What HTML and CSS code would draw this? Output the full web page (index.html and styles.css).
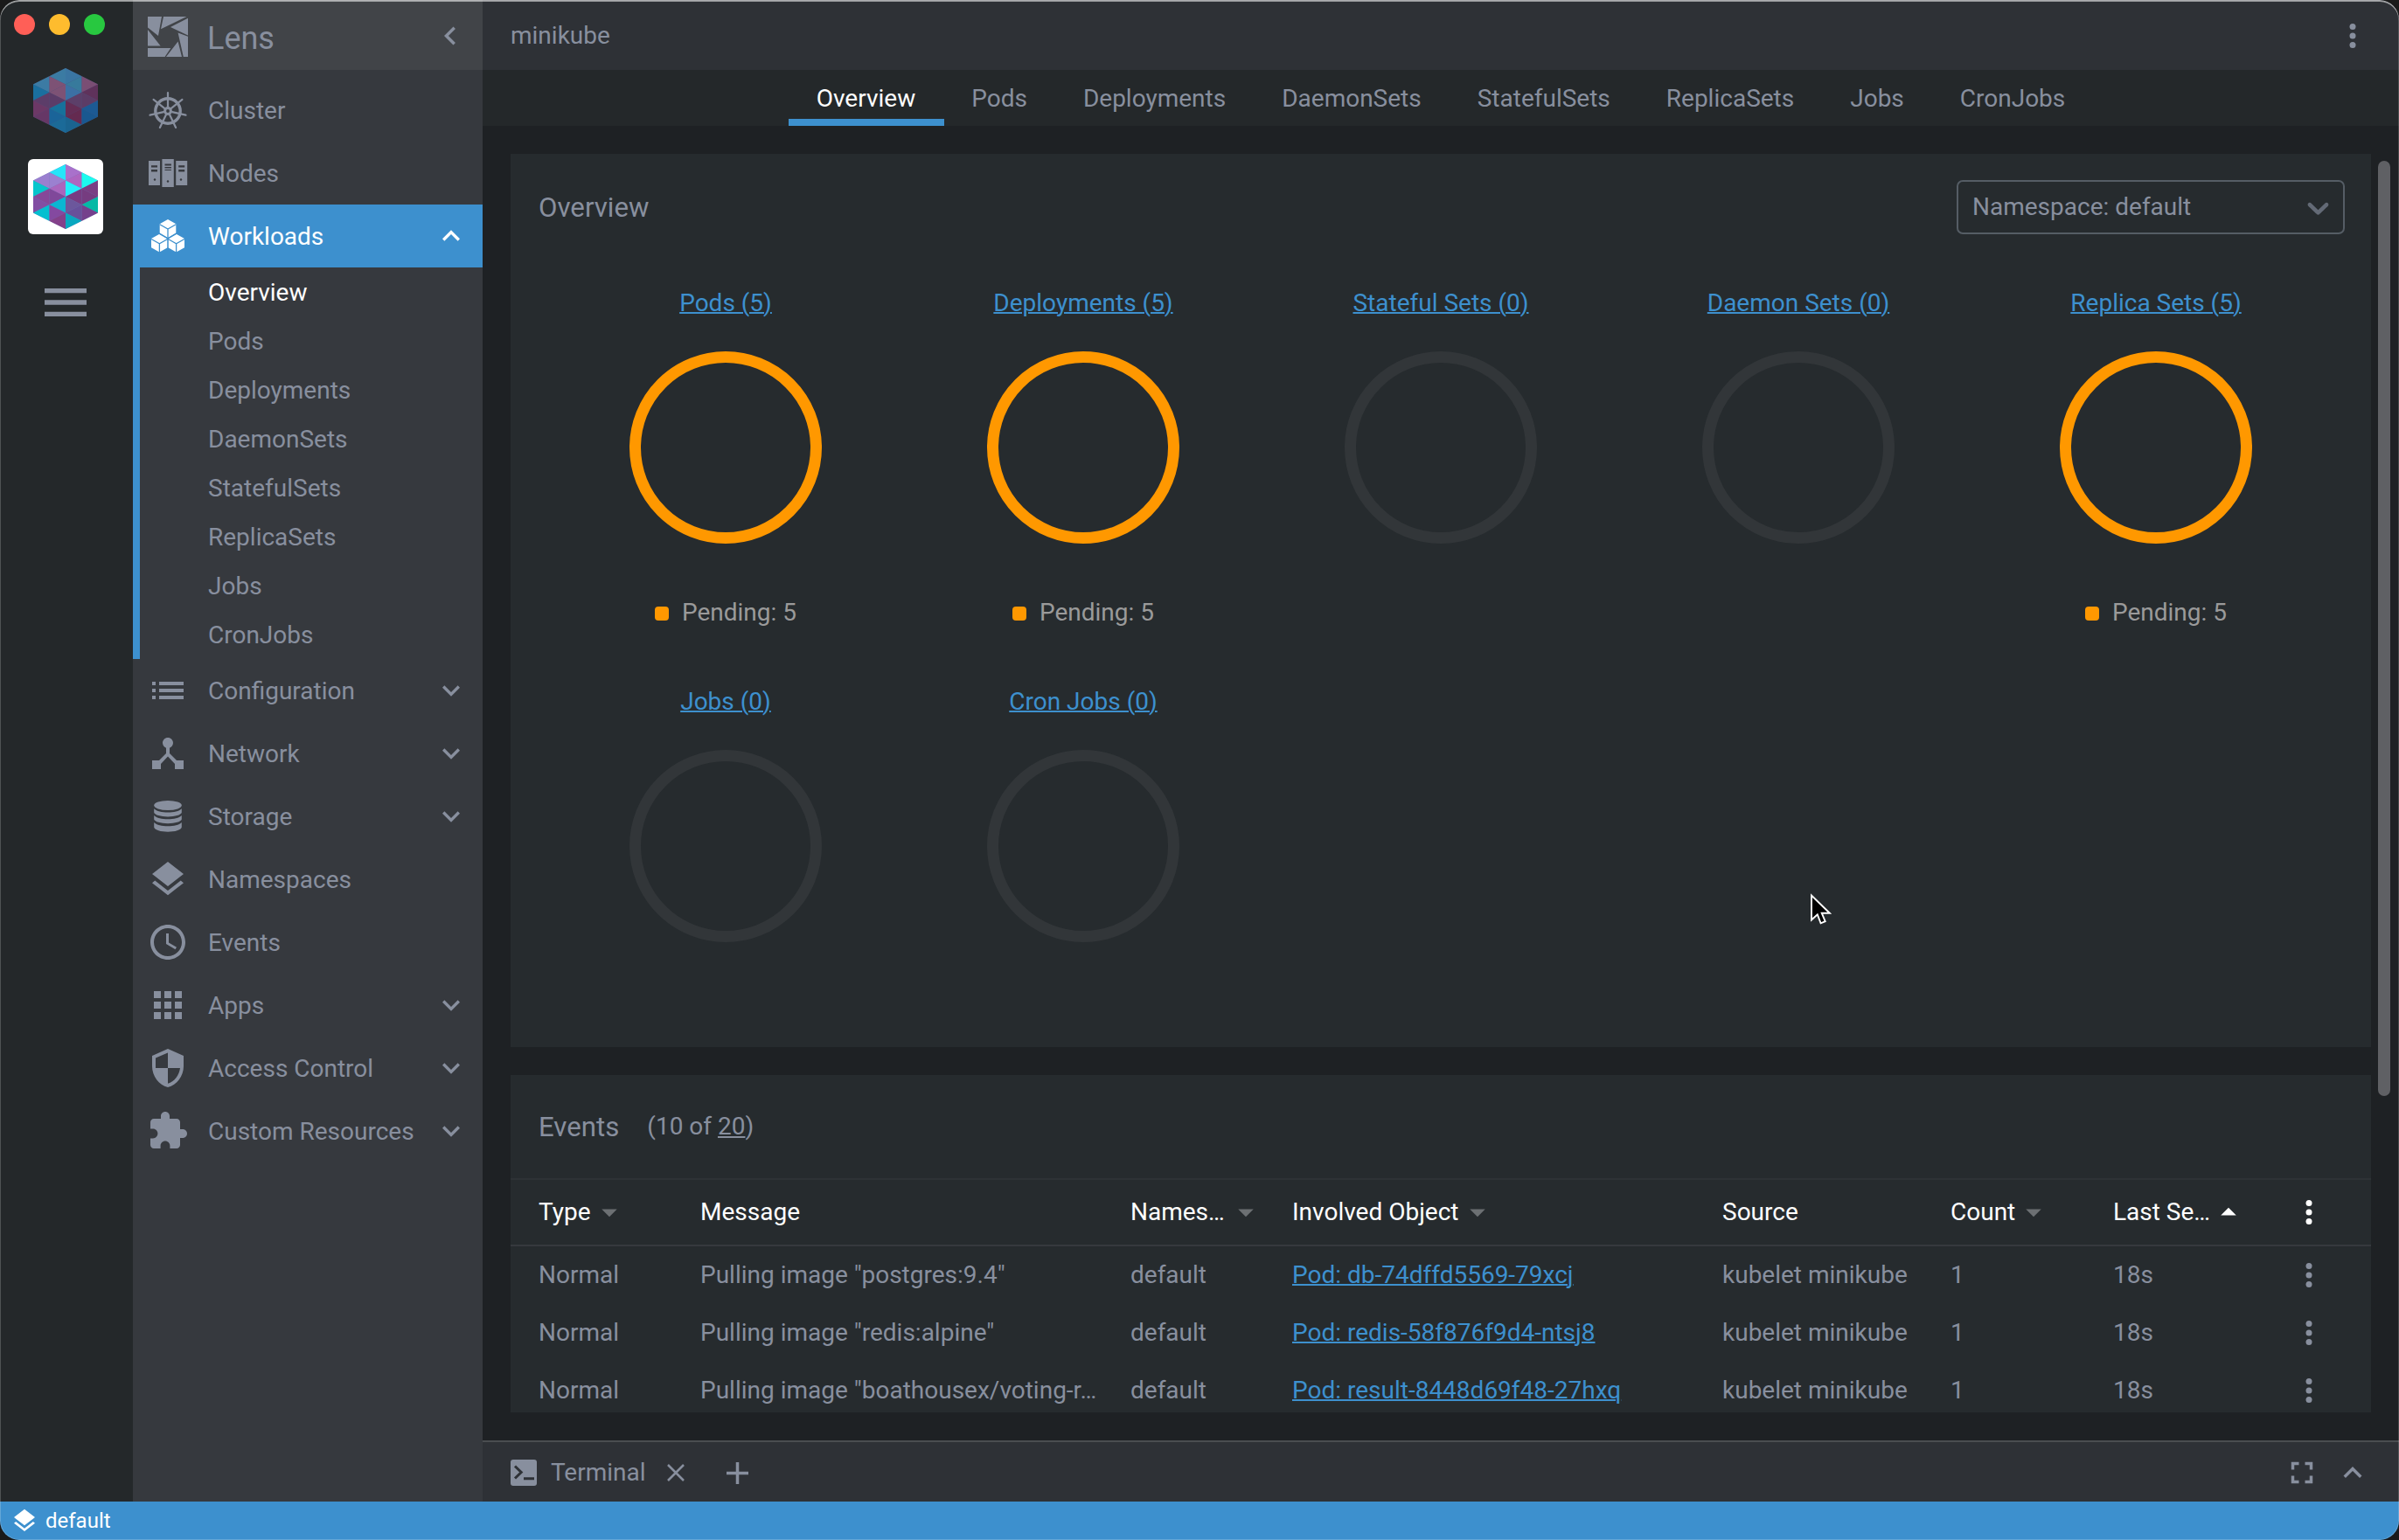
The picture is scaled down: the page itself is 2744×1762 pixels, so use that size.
FILE: index.html
```html
<!DOCTYPE html>
<html lang="en">
<head>
<meta charset="utf-8">
<title>Lens</title>
<link rel="stylesheet" href="styles.css">
</head>
<body>
<svg class="defs" width="0" height="0" aria-hidden="true">
  <symbol id="down" viewBox="0 0 24 24"><path d="M16.59 8.59L12 13.17 7.41 8.59 6 10l6 6 6-6z"/></symbol>
  <symbol id="up" viewBox="0 0 24 24"><path d="M12 8l-6 6 1.41 1.41L12 10.83l4.59 4.58L18 14z"/></symbol>
  <symbol id="more" viewBox="0 0 24 24"><circle cx="12" cy="6" r="2"/><circle cx="12" cy="12" r="2"/><circle cx="12" cy="18" r="2"/></symbol>
  <symbol id="sort-down" viewBox="0 0 24 24"><path d="M7 10l5 5 5-5z"/></symbol>
  <symbol id="sort-up" viewBox="0 0 24 24"><path d="M7 14l5-5 5 5z"/></symbol>
  <symbol id="layers" viewBox="0 0 24 24"><path d="M11.99 18.54l-7.37-5.73L3 14.07l9 7 9-7-1.63-1.27-7.38 5.74zM12 16l7.36-5.73L21 9l-9-7-9 7 1.63 1.27L12 16z"/></symbol>
</svg>
<div class="window">
  <aside class="rail">
    <div class="lights"><i class="light red"></i><i class="light yellow"></i><i class="light green"></i></div>
    <div class="cluster">
      <svg class="hash" viewBox="-2 -4 4 8" preserveAspectRatio="none">
        <path fill="#4a5580" d="M0-4 2-2V2L0 4-2 2V-2z"/>
        <path fill="#3c7ba4" d="M-2-2-1-3-1-1z"/><path fill="#1a6f9f" d="M-2-2-2 0-1-1z"/><path fill="#5c3d69" d="M-1-1-2 0-1 1z"/><path fill="#6c3866" d="M-2 0-2 2-1 1z"/><path fill="#663766" d="M-1 1-2 2-1 3z"/>
        <path fill="#3b7ba3" d="M0-4 0-2-1-3z"/><path fill="#7d5275" d="M-1-3 0-2-1-1z"/><path fill="#7d5275" d="M0-2 0 0-1-1z"/><path fill="#5b3c68" d="M-1-1 0 0-1 1z"/><path fill="#17719b" d="M0 0 0 2-1 1z"/><path fill="#1a6499" d="M-1 1 0 2-1 3z"/><path fill="#1b6a98" d="M0 2 0 4-1 3z"/>
        <path fill="#3a75a2" d="M0-4 0-2 1-3z"/><path fill="#377a9c" d="M1-3 0-2 1-1z"/><path fill="#3c70a4" d="M0-2 0 0 1-1z"/><path fill="#5c3f69" d="M1-1 0 0 1 1z"/><path fill="#642d55" d="M0 0 0 2 1 1z"/><path fill="#642a50" d="M1 1 0 2 1 3z"/><path fill="#1a6490" d="M0 2 0 4 1 3z"/>
        <path fill="#7a4e74" d="M2-2 1-3 1-1z"/><path fill="#5f325b" d="M2-2 2 0 1-1z"/><path fill="#5c3c66" d="M1-1 2 0 1 1z"/><path fill="#1c5a94" d="M2 0 2 2 1 1z"/><path fill="#195890" d="M1 1 2 2 1 3z"/>
      </svg>
    </div>
    <div class="cluster active">
      <svg class="hash" viewBox="-2 -4 4 8" preserveAspectRatio="none">
        <path fill="#6a7cb8" d="M0-4 2-2V2L0 4-2 2V-2z"/>
        <path fill="#9a7fcf" d="M-2-2-1-3-1-1z"/><path fill="#06c5cc" d="M-2-2-2 0-1-1z"/><path fill="#864899" d="M-1-1-2 0-1 1z"/><path fill="#824ea3" d="M-2 0-2 2-1 1z"/><path fill="#04bfd0" d="M-1 1-2 2-1 3z"/>
        <path fill="#24e5f9" d="M0-4 0-2-1-3z"/><path fill="#9b80d0" d="M-1-3 0-2-1-1z"/><path fill="#aa66bd" d="M0-2 0 0-1-1z"/><path fill="#80489a" d="M-1-1 0 0-1 1z"/><path fill="#0bb6d2" d="M0 0 0 2-1 1z"/><path fill="#8449a0" d="M-1 1 0 2-1 3z"/><path fill="#844089" d="M0 2 0 4-1 3z"/>
        <path fill="#a971cb" d="M0-4 0-2 1-3z"/><path fill="#ae66c0" d="M1-3 0-2 1-1z"/><path fill="#22eefb" d="M0-2 0 0 1-1z"/><path fill="#783c82" d="M1-1 0 0 1 1z"/><path fill="#6c579c" d="M0 0 0 2 1 1z"/><path fill="#68509a" d="M1 1 0 2 1 3z"/><path fill="#09a8c0" d="M0 2 0 4 1 3z"/>
        <path fill="#1cfbef" d="M2-2 1-3 1-1z"/><path fill="#7a3f83" d="M2-2 2 0 1-1z"/><path fill="#763c80" d="M1-1 2 0 1 1z"/><path fill="#06b9a5" d="M2 0 2 2 1 1z"/><path fill="#75408c" d="M1 1 2 2 1 3z"/>
      </svg>
    </div>
    <svg class="burger" viewBox="0 0 24 24"><path d="M3 18h18v-2H3v2zm0-5h18v-2H3v2zm0-7v2h18V6H3z"/></svg>
  </aside>

  <nav class="sidebar">
    <header class="brand">
      <svg class="logo" viewBox="0 0 46 46"><path d="M0 0H16L12 22 0 12.5zM18 0H44.5L15 14.2zM46 1.7V21.5L26 12zM34.6 18.5L46 22.8V46H40.8zM34.6 28.5L39 46H21zM0 36H26.3L19.6 46H0zM0 15L14.6 33.6H0z"/></svg>
      <span>Lens</span>
      <svg class="collapse" viewBox="0 0 24 24"><path d="M15.41 7.41L14 6l-6 6 6 6 1.41-1.41L10.83 12z"/></svg>
    </header>
    <div class="menu">
      <a class="item">
        <svg class="icon" viewBox="0 0 48 48"><circle cx="24" cy="25" r="14.2" fill="none" stroke="currentColor" stroke-width="3.4"/><g stroke="currentColor" stroke-width="2.2" stroke-linecap="round"><path id="spoke" d="M24 20V4"/><use href="#spoke" transform="rotate(51.43 24 25)"/><use href="#spoke" transform="rotate(102.86 24 25)"/><use href="#spoke" transform="rotate(154.29 24 25)"/><use href="#spoke" transform="rotate(205.71 24 25)"/><use href="#spoke" transform="rotate(257.14 24 25)"/><use href="#spoke" transform="rotate(308.57 24 25)"/></g><circle cx="24" cy="25" r="3.4" fill="none" stroke="currentColor" stroke-width="3"/></svg>
        <span>Cluster</span></a>
      <a class="item">
        <svg class="icon" viewBox="0 0 48 48"><path d="M2 10h13v28H2zM17.4 8h13.4v32H17.4zM33.2 10h13v28h-13z"/><g fill="#36393e"><path d="M5 15.2h7v2.4H5zM5 20h7v2.4H5zM20.5 13.6h7.4v2H20.5zM20.5 17h7.4v1.4H20.5zM20.5 20h7.4v1H20.5zM36.2 15.2h7v2.4h-7zM36.2 20h7v2.4h-7z"/><circle cx="9" cy="31.5" r="1.2"/><circle cx="24" cy="33.5" r="1.2"/><circle cx="39" cy="31.5" r="1.2"/></g></svg>
        <span>Nodes</span></a>
      <a class="item open">
        <svg class="icon" viewBox="0 0 48 48"><path d="M24 5l9.3 5.2v10.4L24 26l-9.3-5.4V10.2zM14.4 21.7l9.3 5.2v10.4L14.4 42.6 5 37.3V26.9zM33.6 21.7L43 26.9v10.4l-9.4 5.3-9.3-5.3V26.9z"/><path d="M14.7 10.8L24 16l9.3-5.2M24 16v10M5 27.5l9.4 5.2 9.3-5.2M14.4 32.7V43M24.3 27.5l9.3 5.2 9.4-5.2M33.6 32.7V43M24 26v12M14 21.3L24 27l10-5.7" fill="none" stroke="#3d90ce" stroke-width="1.3"/></svg>
        <span>Workloads</span><svg class="chev"><use href="#up"/></svg></a>
      <div class="submenu">
        <a class="current">Overview</a><a>Pods</a><a>Deployments</a><a>DaemonSets</a><a>StatefulSets</a><a>ReplicaSets</a><a>Jobs</a><a>CronJobs</a>
      </div>
      <a class="item"><svg class="icon" viewBox="0 0 24 24"><path d="M3 13h2v-2H3v2zm0 4h2v-2H3v2zm0-8h2V7H3v2zm4 4h14v-2H7v2zm0 4h14v-2H7v2zM7 7v2h14V7H7z"/></svg><span>Configuration</span><svg class="chev"><use href="#down"/></svg></a>
      <a class="item"><svg class="icon" viewBox="0 0 24 24"><path d="M17 16l-4-4V8.82C14.16 8.4 15 7.3 15 6c0-1.66-1.34-3-3-3S9 4.34 9 6c0 1.3.84 2.4 2 2.82V12l-4 4H3v5h5v-3.05l4-4.2 4 4.2V21h5v-5h-4z"/></svg><span>Network</span><svg class="chev"><use href="#down"/></svg></a>
      <a class="item"><svg class="icon" viewBox="0 0 48 48"><ellipse cx="24" cy="11.5" rx="15.8" ry="5.5"/><path d="M8.2 15.2c3 3 9 4.2 15.8 4.2s12.8-1.2 15.8-4.2v4.6c-1 2.7-7.5 4.6-15.8 4.6S9.2 22.5 8.2 19.8zM8.2 23c3 3 9 4.2 15.8 4.2S36.8 26 39.8 23v4.6c-1 2.7-7.5 4.6-15.8 4.6S9.2 30.3 8.2 27.6zM8.2 31c3 3 9 4.2 15.8 4.2s12.8-1.2 15.8-4.2v5.6c-1 3.2-7.5 5.2-15.8 5.2S9.2 39.8 8.2 36.6z"/></svg><span>Storage</span><svg class="chev"><use href="#down"/></svg></a>
      <a class="item"><svg class="icon"><use href="#layers"/></svg><span>Namespaces</span></a>
      <a class="item"><svg class="icon" viewBox="0 0 24 24"><path d="M11.99 2C6.47 2 2 6.48 2 12s4.47 10 9.99 10C17.52 22 22 17.52 22 12S17.52 2 11.99 2zM12 20c-4.42 0-8-3.58-8-8s3.58-8 8-8 8 3.58 8 8-3.58 8-8 8zm.5-13H11v6l5.25 3.15.75-1.23-4.5-2.67z"/></svg><span>Events</span></a>
      <a class="item"><svg class="icon" viewBox="0 0 24 24"><path d="M4 8h4V4H4v4zm6 12h4v-4h-4v4zm-6 0h4v-4H4v4zm0-6h4v-4H4v4zm6 0h4v-4h-4v4zm6-10v4h4V4h-4zm-6 4h4V4h-4v4zm6 6h4v-4h-4v4zm0 6h4v-4h-4v4z"/></svg><span>Apps</span><svg class="chev"><use href="#down"/></svg></a>
      <a class="item"><svg class="icon" viewBox="0 0 24 24"><path d="M12 1L3 5v6c0 5.55 3.84 10.74 9 12 5.16-1.26 9-6.45 9-12V5l-9-4zm0 10.99h7c-.53 4.12-3.28 7.79-7 8.94V12H5V6.3l7-3.11v8.8z"/></svg><span>Access Control</span><svg class="chev"><use href="#down"/></svg></a>
      <a class="item"><svg class="icon" viewBox="0 0 24 24"><path d="M20.5 11H19V7c0-1.1-.9-2-2-2h-4V3.5C13 2.12 11.88 1 10.5 1S8 2.12 8 3.5V5H4c-1.1 0-1.99.9-1.99 2v3.8H3.5c1.49 0 2.7 1.21 2.7 2.7s-1.21 2.7-2.7 2.7H2V20c0 1.1.9 2 2 2h3.8v-1.5c0-1.49 1.21-2.7 2.7-2.7 1.49 0 2.7 1.21 2.7 2.7V22H17c1.1 0 2-.9 2-2v-4h1.5c1.38 0 2.5-1.12 2.5-2.5S21.88 11 20.5 11z"/></svg><span>Custom Resources</span><svg class="chev"><use href="#down"/></svg></a>
    </div>
  </nav>

  <main class="main">
    <header class="topbar"><span>minikube</span><svg class="i42"><use href="#more"/></svg></header>
    <div class="tabs"><a class="tab on">Overview</a><a class="tab">Pods</a><a class="tab">Deployments</a><a class="tab">DaemonSets</a><a class="tab">StatefulSets</a><a class="tab">ReplicaSets</a><a class="tab">Jobs</a><a class="tab">CronJobs</a></div>
    <div class="content">
      <div class="panels">
        <section class="panel overview">
          <div class="head">
            <h2>Overview</h2>
            <div class="select"><span>Namespace: default</span><svg viewBox="0 0 20 20"><path d="M4.516 7.548c.436-.446 1.043-.481 1.576 0L10 11.295l3.908-3.747c.533-.481 1.141-.446 1.574 0 .436.445.408 1.197 0 1.615-.406.418-4.695 4.502-4.695 4.502-.217.223-.502.335-.787.335s-.57-.112-.789-.335c0 0-4.287-4.084-4.695-4.502s-.436-1.17 0-1.615z"/></svg></div>
          </div>
          <div class="charts">
            <div class="chart"><a class="link">Pods (5)</a><div class="ring pending"></div><div class="legend"><i></i>Pending: 5</div></div>
            <div class="chart"><a class="link">Deployments (5)</a><div class="ring pending"></div><div class="legend"><i></i>Pending: 5</div></div>
            <div class="chart"><a class="link">Stateful Sets (0)</a><div class="ring"></div></div>
            <div class="chart"><a class="link">Daemon Sets (0)</a><div class="ring"></div></div>
            <div class="chart"><a class="link">Replica Sets (5)</a><div class="ring pending"></div><div class="legend"><i></i>Pending: 5</div></div>
            <div class="chart"><a class="link">Jobs (0)</a><div class="ring"></div></div>
            <div class="chart"><a class="link">Cron Jobs (0)</a><div class="ring"></div></div>
          </div>
        </section>
        <section class="panel events">
          <div class="head"><h2>Events</h2><span>(10 of <u>20</u>)</span></div>
          <div class="row thead">
            <div class="cell"><span>Type</span><svg class="i42"><use href="#sort-down"/></svg></div>
            <div class="cell"><span>Message</span></div>
            <div class="cell"><span class="fill">Names…</span><svg class="i42"><use href="#sort-down"/></svg></div>
            <div class="cell"><span>Involved Object</span><svg class="i42"><use href="#sort-down"/></svg></div>
            <div class="cell"><span>Source</span></div>
            <div class="cell"><span>Count</span><svg class="i42"><use href="#sort-down"/></svg></div>
            <div class="cell sorted"><span class="fill">Last Se…</span><svg class="i42"><use href="#sort-up"/></svg></div>
            <div class="cell sorted"><svg class="i42"><use href="#more"/></svg></div>
          </div>
          <div class="row"><div class="cell">Normal</div><div class="cell">Pulling image "postgres:9.4"</div><div class="cell">default</div><div class="cell"><a class="link">Pod: db-74dffd5569-79xcj</a></div><div class="cell">kubelet minikube</div><div class="cell">1</div><div class="cell">18s</div><div class="cell"><svg class="i42"><use href="#more"/></svg></div></div>
          <div class="row"><div class="cell">Normal</div><div class="cell">Pulling image "redis:alpine"</div><div class="cell">default</div><div class="cell"><a class="link">Pod: redis-58f876f9d4-ntsj8</a></div><div class="cell">kubelet minikube</div><div class="cell">1</div><div class="cell">18s</div><div class="cell"><svg class="i42"><use href="#more"/></svg></div></div>
          <div class="row"><div class="cell">Normal</div><div class="cell">Pulling image "boathousex/voting-r…</div><div class="cell">default</div><div class="cell"><a class="link">Pod: result-8448d69f48-27hxq</a></div><div class="cell">kubelet minikube</div><div class="cell">1</div><div class="cell">18s</div><div class="cell"><svg class="i42"><use href="#more"/></svg></div></div>
        </section>
      </div>
      <div class="scroll"><div class="thumb"></div></div>
    </div>
    <footer class="dock">
      <svg class="term" viewBox="0 0 30 30"><rect width="30" height="30" rx="3"/><path d="M5 7.5l7.2 7L5 21.5M15 21.7h12" fill="none" stroke="#2e3136" stroke-width="3"/></svg>
      <span class="dock-title">Terminal</span>
      <svg class="close" viewBox="0 0 20 20"><path d="M1 1l18 18M19 1L1 19"/></svg>
      <svg class="plus" viewBox="0 0 25 25"><path d="M12.5 0v25M0 12.5h25"/></svg>
      <svg class="i42 full" viewBox="0 0 24 24"><path d="M7 14H5v5h5v-2H7v-3zm-2-4h2V7h3V5H5v5zm12 7h-3v2h5v-5h-2v3zM14 5v2h3v3h2V5h-5z"/></svg>
      <svg class="i42"><use href="#up"/></svg>
    </footer>
  </main>

  <footer class="status"><svg><use href="#layers"/></svg><span>default</span></footer>
  <svg class="cursor" viewBox="0 0 24 37"><path d="M1 2.5V30.5L7.8 24.3 11.6 34.3 16.7 32.2 12.7 22.7H21.8z" fill="#000" stroke="#fff" stroke-width="1.9"/></svg>
</div>
</body>
</html>
```
FILE: styles.css
```css
* { box-sizing: border-box; }
body { margin: 0; background: #1a1a1a; font: 28px/32px Roboto, sans-serif; color: #888f9e; }
svg { fill: currentColor; flex: none; display: block; }
.defs { position: absolute; }
.window { position: relative; width: 2744px; height: 1762px; display: grid; grid-template: 1718px 44px / 152px 400px 1fr; border-radius: 22px; overflow: hidden; background: #1e2124; }
.window::after { content: ""; position: absolute; inset: 0; border-radius: 22px; pointer-events: none; box-shadow: inset 0 0 0 1px rgba(255,255,255,.2), inset 0 2px 0 rgba(255,255,255,.5); }

.rail { background: #24282a; padding-right: 2px; display: flex; flex-direction: column; align-items: center; }
.lights { align-self: flex-start; display: flex; gap: 16px; padding: 16px 0 0 16px; }
.light { width: 24px; height: 24px; border-radius: 50%; }
.red { background: #ff5f57; }
.yellow { background: #febc2e; }
.green { background: #28c840; }
.cluster { width: 86px; height: 86px; border-radius: 6px; padding: 6px; margin-top: 32px; }
.cluster.active { margin-top: 24px; background: #fff; }
.hash { width: 74px; height: 74px; }
.burger { width: 64px; height: 64px; margin-top: 46px; }

.sidebar { background: #36393e; }
.brand { height: 80px; background: #414448; display: flex; align-items: center; padding: 4px 16px 0 17px; font-size: 36px; }
.brand span { padding-top: 4px; }
.logo { width: 46px; height: 46px; margin-right: 22px; }
.collapse { width: 42px; height: 42px; margin: -3px 0 0 auto; }
.menu { padding-top: 10px; }
.item { display: flex; align-items: center; height: 72px; padding: 0 16px; }
.item span { padding-top: 2px; }
.icon { width: 48px; height: 48px; margin-right: 22px; }
.chev { width: 40px; height: 40px; margin-left: auto; }
.item.open { background: #3d90ce; color: #fff; }
.submenu { border-left: 8px solid #3d90ce; }
.submenu a { display: block; height: 56px; line-height: 58px; padding-left: 78px; }
.submenu .current { color: #fff; }

.main { display: grid; grid-template-rows: 80px 64px 1fr 70px; min-width: 0; }
.topbar { background: #2e3136; display: flex; align-items: center; justify-content: space-between; padding: 2px 32px 0; }
.i42 { width: 42px; height: 42px; }
.tabs { background: #24282a; display: flex; justify-content: center; }
.tab { padding: 0 32px; line-height: 66px; height: 64px; }
.tab.on { color: #fff; padding-right: 33px; margin-right: -1px; box-shadow: inset 0 -8px 0 #3d90ce; }
.content { display: flex; padding: 32px 10px 32px 32px; background: #1e2124; }
.panels { flex: 1; display: flex; flex-direction: column; gap: 32px; min-width: 0; }
.panel { background: #262b2e; }
h2 { margin: 0; padding-top: 2px; font-weight: 400; font-size: 31.2px; }
.overview { height: 1022px; padding: 30px 30px 0 32px; }
.overview .head { display: flex; align-items: center; justify-content: space-between; }
.select { width: 444px; height: 62px; border: 2px solid #555d65; border-radius: 7px; display: flex; align-items: center; justify-content: space-between; padding: 0 8px 0 16px; }
.select svg { width: 41px; height: 41px; color: #636a76; }
.charts { margin: 63px 2px 0 0; display: grid; grid-template-columns: repeat(5, 409px); grid-auto-rows: 456px; justify-content: center; }
.chart { display: flex; flex-direction: column; align-items: center; }
.link { color: #3d90ce; text-decoration: underline; text-decoration-thickness: 2px; }
.ring { width: 220px; height: 220px; border-radius: 50%; border: 13.4px solid #323639; margin: 39px 0 62px; }
.ring.pending { border-color: #ff9800; }
.legend { display: flex; align-items: center; height: 34px; color: #9a9a9a; gap: 15px; }
.legend i { width: 16px; height: 16px; border-radius: 4px; background: #ff9800; margin-top: 2px; }
.events { height: 386px; overflow: hidden; }
.events .head { height: 118px; display: flex; align-items: center; gap: 32px; padding-left: 32px; }
.row { display: grid; grid-template-columns: 185px 492px 185px 492px 261px 186px 203px 1fr; height: 66px; align-items: center; padding-left: 32px; }
.thead { height: 78px; border-top: 2px solid #2e3236; border-bottom: 2px solid #36393e; color: #fff; }
.cell { display: flex; align-items: center; white-space: nowrap; }
.thead .cell svg { color: #6c7073; }
.thead .sorted svg { color: #fff; }
.fill { width: 111px; }
.scroll { width: 22px; padding: 8px 0 0 8px; }
.thumb { width: 14px; height: 1070px; border-radius: 7px; background: #5f6064; }
.dock { background: #2e3136; border-top: 2px solid #4a4d50; display: flex; align-items: center; padding: 2px 32px 0; }
.term { width: 30px; height: 30px; margin-right: 16px; }
.close { width: 20px; height: 20px; margin-left: 24px; stroke: currentColor; stroke-width: 2.5; }
.plus { width: 25px; height: 25px; margin-left: 48px; stroke: currentColor; stroke-width: 3.5; }
.full { margin: 0 16px 0 auto; }
.status { grid-column: 1 / -1; background: #3d90ce; color: #fff; font-size: 24px; display: flex; align-items: center; padding-left: 12px; gap: 8px; }
.status svg { width: 32px; height: 32px; }
.cursor { position: absolute; left: 2071px; top: 1022px; width: 24px; height: 37px; }
```
